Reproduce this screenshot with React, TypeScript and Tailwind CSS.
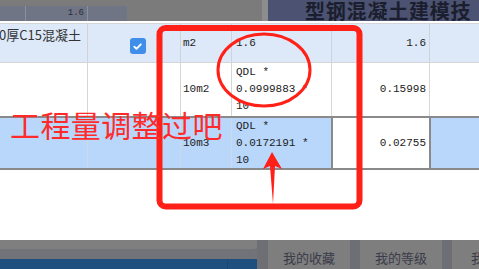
import React from "react";

const MONO = "font-['Liberation_Mono','Noto_Sans_CJK_SC',monospace]";
const CJK = "font-['Noto_Sans_CJK_SC','Noto_Sans',sans-serif]";

const Checkbox = () => (
  <span className="flex h-[16px] w-[16px] items-center justify-center rounded-[3px] bg-[#3f8ee9]">
    <svg width="11" height="11" viewBox="0 0 12 12" fill="none">
      <path d="M2.5 6.2l2.4 2.4L9.6 3.6" stroke="#fff" strokeWidth="2" strokeLinecap="round" strokeLinejoin="round" />
    </svg>
  </span>
);

const Formula = ({ value }: { value: string }) => (
  <div className="flex flex-col whitespace-nowrap pl-[4px] leading-[17px]">
    <span>QDL *</span>
    <span>{value} *</span>
    <span>10</span>
  </div>
);

const Annotations = () => (
  <>
    <svg className="pointer-events-none absolute left-0 top-0" width="479" height="269" viewBox="0 0 479 269">
      <rect x="159.5" y="28" width="200" height="178.5" rx="6" fill="none" stroke="#ff2118" strokeWidth="6" />
      <ellipse cx="264" cy="70" rx="46" ry="36" fill="none" stroke="#ff2118" strokeWidth="3" />
      <path d="M272 152 L282 169 L275 166 L273 204 L270 166 L263 169 Z" fill="#ff2118" />
    </svg>
    <span className={`${CJK} pointer-events-none absolute left-[10px] top-[109px] text-[30px] leading-none tracking-[0.4px] text-[#ff2b2b]`}>
      工程量调整过吧
    </span>
  </>
);

export default function App() {
  return (
    <div className={`${MONO} relative h-[269px] w-[479px] overflow-hidden bg-white text-[11px] text-[#222]`}>
      {/* dimmed header strip */}
      <div className="flex h-[21px] bg-[#7b7b7b]">
        <div className="mt-[6px] flex h-[15px] w-[127px] bg-[#707585] text-[9px] text-[#2a2d38]">
          <div className="w-[26px] border-r border-[#8b90a0]" />
          <div className="w-[62px] border-r border-[#8b90a0] pr-[3px] text-right leading-[15px]">1.6</div>
        </div>
        <div className="w-[135px]" />
        <div className="w-[6px] bg-[#8d8d8d]" />
        <div className={`${CJK} flex-1 overflow-hidden whitespace-nowrap bg-[#4c5271] pl-[37px] text-[20px] font-bold leading-[21px] tracking-[0.8px] text-[#1b1e2e]`}>
          型钢混凝土建模技
        </div>
      </div>
      <div className="h-[2px] bg-white" />

      {/* row 1 */}
      <div className="flex h-[40px] border-y border-[#d4d6da] bg-[#dde9f9]">
        <div className={`${CJK} w-[88px] overflow-hidden whitespace-nowrap border-r border-[#d0d3d8] pt-[2px] text-[13px] leading-[18px] text-[#333]`}>
          <span className="-ml-[1px]">0厚C15混凝土</span>
        </div>
        <div className="flex w-[93px] items-center justify-center border-r border-[#d0d3d8] pt-[6px] pl-[7px]">
          <Checkbox />
        </div>
        <div className="flex w-[51px] items-center border-r border-[#d0d3d8] pl-[2px]">m2</div>
        <div className="flex w-[100px] items-center border-r border-[#d0d3d8] pl-[4px]">1.6</div>
        <div className="flex w-[98px] items-center justify-end border-r border-[#d0d3d8] pr-[3px]">1.6</div>
        <div className="flex-1" />
      </div>

      {/* row 2 */}
      <div className="flex h-[55px] border-b-2 border-[#8a8a8a] bg-white">
        <div className="w-[88px] border-r border-[#d6d6d6]" />
        <div className="w-[93px] border-r border-[#d6d6d6]" />
        <div className="flex w-[51px] items-center border-r border-[#d6d6d6] pl-[2px]">10m2</div>
        <div className="flex w-[100px] items-center border-r border-[#d6d6d6]">
          <Formula value="0.0999883" />
        </div>
        <div className="flex w-[98px] items-center justify-end border-r border-[#d6d6d6] pr-[3px]">0.15998</div>
        <div className="flex-1" />
      </div>

      {/* row 3 (selected) */}
      <div className="flex h-[52px] border-b-2 border-[#8a8a8a] bg-[#b8d7fb]">
        <div className="w-[88px] border-r border-[#cdd9e6]" />
        <div className="w-[93px] border-r border-[#cdd9e6]" />
        <div className="flex w-[51px] items-center border-r border-[#cdd9e6] pl-[2px]">10m3</div>
        <div className="flex w-[99px] items-center">
          <Formula value="0.0172191" />
        </div>
        <div className="flex w-[100px] items-center justify-end border-x-2 border-[#8a8a8a] bg-white pr-[3px]">0.02755</div>
        <div className="flex-1" />
      </div>

      <div className="h-[70px]" />

      {/* dimmed footer */}
      <div className={`${CJK} flex h-[29px] bg-[#6e6f75] text-[13px] text-[#3b3c4a]`}>
        <div className="flex w-[257px] flex-col">
          <div className="h-[9px] rounded-br-[3px] bg-[#7f7f7f]" />
          <div className="h-[10px] bg-[#727378]" />
          <div className="flex h-[10px] bg-[#1e4f7f]">
            <div className="w-[228px] border-r border-[#1a4673]" />
          </div>
        </div>
        <div className="w-[11px]" />
        <div className="flex w-[82px] items-end justify-center bg-[#7e7e7e] pb-[3px] leading-[17px]">我的收藏</div>
        <div className="w-[10px]" />
        <div className="flex w-[82px] items-end justify-center bg-[#7e7e7e] pb-[3px] leading-[17px]">我的等级</div>
        <div className="w-[10px]" />
        <div className="flex flex-1 items-end overflow-hidden whitespace-nowrap bg-[#7e7e7e] pb-[3px] pl-[19px] leading-[17px]">我的</div>
      </div>

      <Annotations />
    </div>
  );
}
